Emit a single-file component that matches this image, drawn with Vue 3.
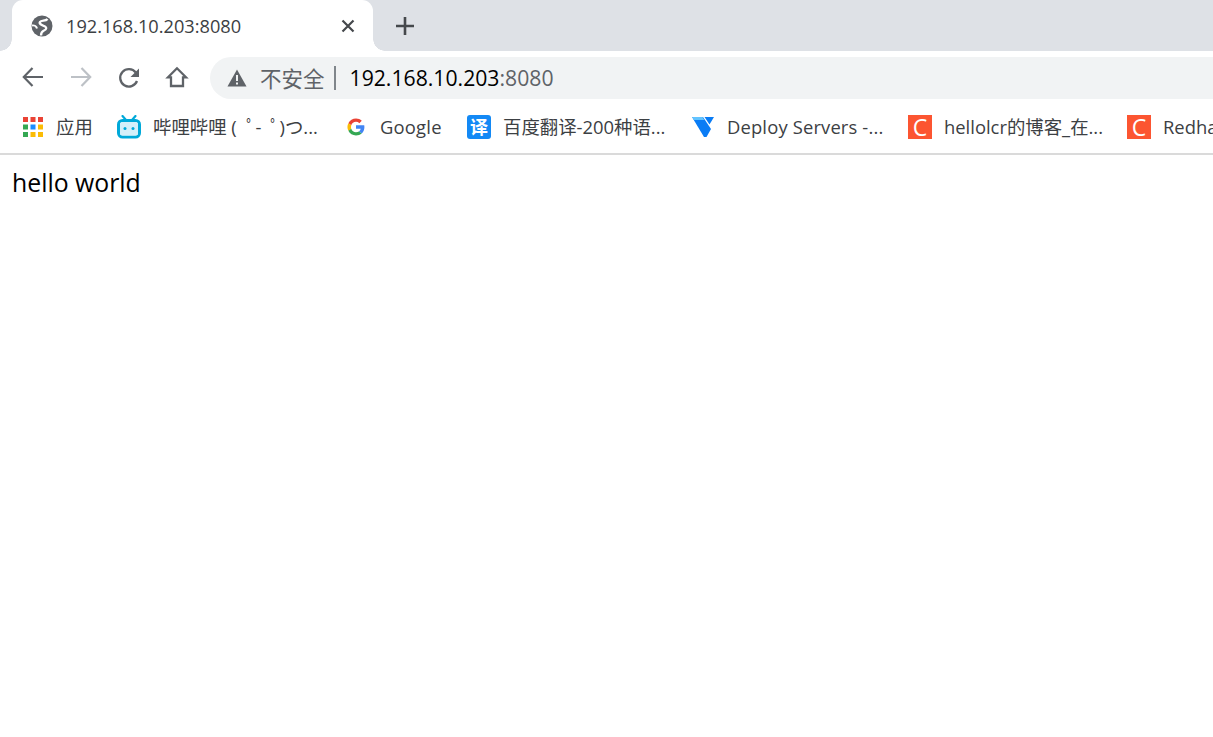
<script setup>
const bookmarks = [
  { id: 'apps', label: '应用' },
  { id: 'bili', label: '哔哩哔哩 (  ﾟ-  ﾟ)つ...' },
  { id: 'google', label: 'Google' },
  { id: 'fanyi', label: '百度翻译-200种语...' },
  { id: 'vultr', label: 'Deploy Servers -...' },
  { id: 'csdn', label: 'hellolcr的博客_在...' },
  { id: 'csdn', label: 'Redhat' },
]
const appColors = ['#ea4335', '#ea4335', '#ea4335', '#34a853', '#1a8cff', '#fbbc05', '#34a853', '#fbbc05', '#fbbc05']
</script>

<template>
  <div class="window">
    <header class="tabstrip">
      <div class="tab">
        <svg class="globe" width="22" height="22" viewBox="0 0 22 22">
          <circle cx="11" cy="11" r="10.5" fill="#5f6368" />
          <path d="M16.500 4c-2 2.500-6 1-7.500 3s3 3.500 5 4.500 1.500 3-1 4-3 2.500-3 5" fill="none" stroke="#fff" stroke-width="2.300" />
          <path d="M1 10.500c2.500-.5 4.500 1 5 3" fill="none" stroke="#fff" stroke-width="2" />
        </svg>
        <span class="tab-title">192.168.10.203:8080</span>
        <svg class="close" width="14" height="14" viewBox="0 0 14 14">
          <path d="M1.500 1.500l11 11M12.500 1.500l-11 11" stroke="#45484c" stroke-width="2.200" fill="none" />
        </svg>
      </div>
      <svg class="plus" width="18" height="18" viewBox="0 0 18 18">
        <path d="M9 0v18M0 9h18" stroke="#45484c" stroke-width="2.600" fill="none" />
      </svg>
    </header>

    <div class="toolbar">
      <svg class="nav" width="24" height="24" viewBox="0 0 24 24">
        <path d="M22 12H3.500M11.500 3L2.800 12l8.700 9" fill="none" stroke="#5f6368" stroke-width="2.200" />
      </svg>
      <svg class="nav" width="24" height="24" viewBox="0 0 24 24">
        <path d="M2 12h18.500M12.500 3l8.700 9-8.700 9" fill="none" stroke="#bdc1c6" stroke-width="2.200" />
      </svg>
      <svg class="nav reload" width="24" height="24" viewBox="0 0 24 24">
        <path d="M20 15a8.700 8.700 0 1 1-1.200-8.500" fill="none" stroke="#5f6368" stroke-width="2.300" />
        <path d="M22 2.500v8.500h-8.500z" fill="#5f6368" />
      </svg>
      <svg class="nav" width="24" height="24" viewBox="0 0 24 24">
        <path d="M12 3.300L3 12.300H6V21h12v-8.700h3z" fill="none" stroke="#5f6368" stroke-width="2.300" />
      </svg>
      <div class="omnibox">
        <svg width="20" height="18" viewBox="0 0 20 18">
          <path d="M10 0.500L19.500 17.500H.5z" fill="#5f6368" />
          <path d="M9 6h2v6H9zM9 13.500h2v2H9z" fill="#f1f3f4" />
        </svg>
        <span class="insecure">不安全</span>
        <span class="divider"></span>
        <span class="url">192.168.10.203<span class="port">:8080</span></span>
      </div>
    </div>

    <nav class="bookmarks">
      <div v-for="(b, i) in bookmarks" :key="i" class="bookmark" :class="'bm-' + i">
        <svg v-if="b.id === 'apps'" width="22" height="22" viewBox="0 0 22 22">
          <rect v-for="(c, n) in appColors" :key="n" :x="2 + (n % 3) * 7.500" :y="1 + Math.floor(n / 3) * 7.500" width="5" height="5" :fill="c" />
        </svg>
        <svg v-else-if="b.id === 'bili'" width="24" height="24" viewBox="0 0 24 24">
          <path d="M5.500 1l3.500 4M18.500 1L15 5" stroke="#00a9d9" stroke-width="2.200" fill="none" stroke-linecap="round" />
          <rect x="1.500" y="5.500" width="21" height="16.500" rx="4" fill="none" stroke="#00a9d9" stroke-width="3" />
          <rect x="3" y="7" width="18" height="13.500" rx="2.500" fill="#d5f0fa" />
          <circle cx="8" cy="13.500" r="1.500" fill="#00a9d9" />
          <circle cx="16" cy="13.500" r="1.500" fill="#00a9d9" />
        </svg>
        <svg v-else-if="b.id === 'google'" width="24" height="24" viewBox="-4 -4 56 56">
          <path fill="#ea4335" d="M24 12c3 0 5.700 1 7.800 3l5.700-5.700C34 6.100 29.300 4 24 4 16.200 4 9.500 8.500 6.200 15l6.700 5.200C14.400 15.400 18.800 12 24 12z" />
          <path fill="#4285f4" d="M43.600 24.500c0-1.600-.1-2.800-.4-4.500H24v8h11.100c-.5 2.700-2 4.800-4.300 6.300l6.600 5.100c3.900-3.600 6.200-8.900 6.200-14.900z" />
          <path fill="#fbbc05" d="M12.900 28.800c-.4-1.200-.6-2.500-.6-3.800s.2-2.600.6-4.800L6.200 15C4.800 17.800 4 20.800 4 24s.8 6.200 2.200 9z" />
          <path fill="#34a853" d="M24 44c5.400 0 9.900-1.800 13.400-4.600l-6.600-5.100c-1.800 1.200-4.100 2-6.800 2-5.200 0-9.600-3.500-11.100-8.200L6.200 33C9.500 39.500 16.200 44 24 44z" />
        </svg>
        <span v-else-if="b.id === 'fanyi'" class="fav-fanyi">译</span>
        <svg v-else-if="b.id === 'vultr'" width="24" height="24" viewBox="0 0 24 24">
          <path d="M1 2h11l8 12-4.500 8h-2.500z" fill="#0a7cf5" />
          <path d="M13.500 2H23l-4.500 7.500z" fill="#0a7cf5" />
          <path d="M1 2h10.500l1.800 3H3z" fill="#62c4ff" />
        </svg>
        <span v-else class="fav-csdn">C</span>
        <span class="bm-label">{{ b.label }}</span>
      </div>
    </nav>

    <main class="page">hello world</main>
  </div>
</template>

<style>
html, body { margin: 0; background: #fff; overflow: hidden; }
</style>

<style scoped>
.window {
  width: 1213px;
  height: 737px;
  overflow: hidden;
  font-family: "Open Sans", "Noto Sans CJK SC", sans-serif;
  color: #3c4043;
}
.tabstrip {
  height: 51px;
  background: #dee1e6;
  display: flex;
  align-items: center;
  padding-left: 12px;
}
.tab {
  position: relative;
  width: 361px;
  height: 51px;
  box-sizing: border-box;
  background: #fff;
  border-radius: 11px 11px 0 0;
  display: flex;
  align-items: center;
  padding: 0 18px 0 19px;
}
.tab::before,
.tab::after {
  content: "";
  position: absolute;
  bottom: 0;
  width: 12px;
  height: 12px;
}
.tab::before {
  left: -12px;
  background: radial-gradient(circle at 0 0, #dee1e6 11.500px, #fff 12px);
}
.tab::after {
  right: -12px;
  background: radial-gradient(circle at 100% 0, #dee1e6 11.500px, #fff 12px);
}
.tab-title {
  margin-left: 13px;
  font-size: 18.200px;
  flex: 1;
  white-space: nowrap;
}
.plus {
  margin-left: 23px;
}
.toolbar {
  height: 52px;
  display: flex;
  align-items: center;
  padding-left: 21px;
  gap: 24px;
  background: #fff;
}
.reload {
  margin-top: 2px;
}
.omnibox {
  flex: 1;
  height: 42px;
  margin: 2px -60px 0 -3px;
  background: #f1f3f4;
  border-radius: 21px;
  display: flex;
  align-items: center;
  padding-left: 17px;
}
.insecure {
  margin: -2px 0 0 13px;
  font-size: 21.500px;
  color: #5f6368;
}
.divider {
  width: 2px;
  height: 24px;
  background: #80868b;
  margin: 0 14px 0 9px;
}
.url {
  margin-top: -2px;
  font-size: 21.200px;
  color: #000;
  white-space: nowrap;
}
.port {
  color: #5f6368;
}
.bookmarks {
  height: 52px;
  box-sizing: border-box;
  border-bottom: 2px solid #dadada;
  display: flex;
  align-items: center;
  padding: 0 0 2px 21px;
  overflow: hidden;
  white-space: nowrap;
  font-size: 18.400px;
}
.bookmark {
  display: flex;
  align-items: center;
  flex: none;
  gap: 12px;
}
.bm-label {
  margin-top: -2px;
  white-space: pre;
}
.bm-0 { width: 96px; gap: 13px; }
.bm-1 { width: 227px; }
.bm-2 { width: 123px; letter-spacing: 0.2px; }
.bm-3 { width: 224px; }
.bm-4 { width: 217px; letter-spacing: 0.15px; }
.bm-5 { width: 219px; }
.fav-fanyi {
  width: 24px;
  height: 24px;
  border-radius: 3px;
  background: #1389f5;
  color: #fff;
  font-size: 18px;
  font-weight: 700;
  line-height: 24px;
  text-align: center;
}
.fav-csdn {
  width: 24px;
  height: 24px;
  background: #fc5531;
  color: #fff;
  font-size: 23px;
  line-height: 24px;
  text-align: center;
}
.page {
  padding: 10px 12px;
  font-size: 24.800px;
  color: #000;
}
</style>
